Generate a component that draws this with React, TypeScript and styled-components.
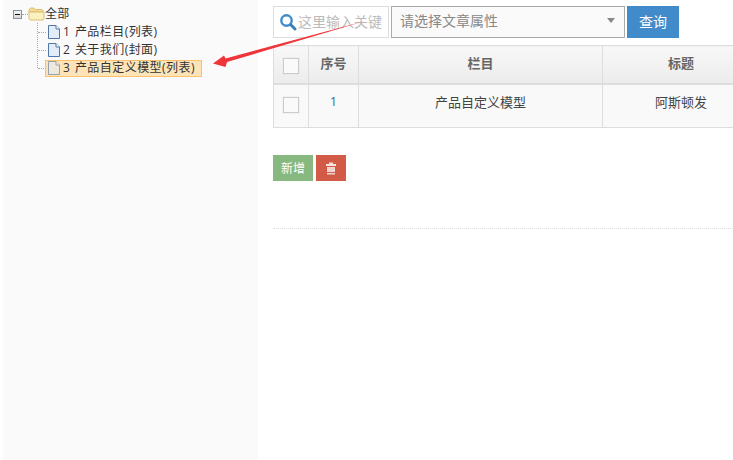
import styled, { createGlobalStyle } from 'styled-components'

const GlobalStyle = createGlobalStyle`
	html, body {
		margin: 0;
		background: #fff;
		font-family: "Open Sans", "Liberation Sans", "Noto Sans CJK SC", sans-serif;
		overflow: hidden;
	}
`

function PageIcon({ faded }: { faded: boolean }) {
	return (
		<svg width="16" height="16" viewBox="0 0 16 16" opacity={faded ? 0.6 : 1}>
			<path d="M2.500 1.500h7.500l3.500 3.500v9.500h-11z" fill="#e3edfa" stroke="#4f78a8" />
			<path d="M10 1.500v3.500h3.500" fill="#fff" stroke="#4f78a8" />
		</svg>
	)
}

function FolderIcon() {
	return (
		<svg width="17" height="14" viewBox="0 0 17 14">
			<path d="M1 4V2.500L2.500 1h3.500l1.500 1.500h6.500l1 1V5H1z" fill="#f3dc96" stroke="#dcbd6e" />
			<path d="M1 5h15v6.500l-1 1.500H2l-1-1.500z" fill="#fbf0c0" stroke="#dcbd6e" />
		</svg>
	)
}

function TrashIcon() {
	return (
		<svg width="12" height="13" viewBox="0 0 12 13">
			<path d="M4 .500h4v1.500h3v2H1V2h3z" fill="#f7e3df" />
			<path d="M2 5h8v7.500H2z" fill="#f3d3cd" />
			<path d="M2 10h8v.800H2z" fill="#b9493a" />
		</svg>
	)
}

function SearchIcon() {
	return (
		<svg width="18" height="18" viewBox="0 0 18 18">
			<circle cx="7.500" cy="7.500" r="5.200" fill="none" stroke="#428bca" strokeWidth="2.400" />
			<path d="M11.500 11.500l4.500 4.500" stroke="#3d7fb8" strokeWidth="3" strokeLinecap="round" />
		</svg>
	)
}

const treeItems = [
	{ label: '1 产品栏目(列表)', active: false },
	{ label: '2 关于我们(封面)', active: false },
	{ label: '3 产品自定义模型(列表)', active: true },
]

function App() {
	return (
		<>
			<GlobalStyle />
			<Page>
				<Sidebar>
					<TreeRoot>
						<Toggle />
						<RootLink />
						<FolderIcon />
						<span>全部</span>
					</TreeRoot>
					<TreeList>
						{treeItems.map((item) => (
							<TreeRow key={item.label}>
								<Dots />
								<TreeNode $active={item.active}>
									<PageIcon faded={item.active} />
									<NodeText>{item.label}</NodeText>
								</TreeNode>
							</TreeRow>
						))}
					</TreeList>
				</Sidebar>
				<Main>
					<Toolbar>
						<SearchBox>
							<SearchIcon />
							<Placeholder>这里输入关键</Placeholder>
						</SearchBox>
						<SelectBox>
							<span>请选择文章属性</span>
							<Caret />
						</SelectBox>
						<QueryButton>查询</QueryButton>
					</Toolbar>
					<TableWrap>
						<Table>
							<colgroup>
								<col width="35" />
								<col width="50" />
								<col width="244" />
								<col width="157" />
							</colgroup>
							<thead>
								<tr>
									<Th $check><Check /></Th>
									<Th>序号</Th>
									<Th>栏目</Th>
									<Th>标题</Th>
								</tr>
							</thead>
							<tbody>
								<tr>
									<Td $check><Check /></Td>
									<Td $link>1</Td>
									<Td>产品自定义模型</Td>
									<Td>阿斯顿发</Td>
								</tr>
							</tbody>
						</Table>
					</TableWrap>
					<Actions>
						<AddButton>新增</AddButton>
						<DeleteButton><TrashIcon /></DeleteButton>
					</Actions>
					<Divider />
				</Main>
				<Arrow width="733" height="460" viewBox="0 0 733 460">
					<path
						d="M213 63.500L224 55.500 225.500 58.500 365 21 227 62 225.500 67z"
						fill="#f0353a"
					/>
				</Arrow>
			</Page>
		</>
	)
}

const Page = styled.div`
	position: relative;
	display: flex;
	width: 733px;
	height: 460px;
	overflow: hidden;
`

const Sidebar = styled.aside`
	width: 255px;
	margin-left: 3px;
	padding: 6px 0 0 10px;
	box-sizing: border-box;
	background: #fafafa;
	font-size: 12px;
	color: #333;
`

const TreeRoot = styled.div`
	display: flex;
	align-items: center;
	height: 16px;

	span {
		letter-spacing: 0.3px;
		line-height: 16px;
	}
`

const Toggle = styled.i`
	position: relative;
	width: 7px;
	height: 7px;
	border: 1px solid #7f93ab;
	background: linear-gradient(#f4f4f4, #d8d8d8);

	&::after {
		content: '';
		position: absolute;
		left: 1px;
		top: 3px;
		width: 5px;
		height: 1px;
		background: #111;
	}
`

const RootLink = styled.i`
	width: 6px;
	border-top: 1px dotted #aaa;
`

const TreeList = styled.div`
	margin-top: 1px;
	margin-left: 24px;
	height: 45px;
	border-left: 1px dotted #aaa;
`

const TreeRow = styled.div`
	display: flex;
	align-items: center;
	height: 18px;
`

const Dots = styled.i`
	flex: none;
	width: 8px;
	border-top: 1px dotted #aaa;
`

const TreeNode = styled.div<{ $active: boolean }>`
	display: flex;
	align-items: center;
	height: ${(p) => (p.$active ? '15px' : '18px')};
	padding-right: ${(p) => (p.$active ? '6px' : '0')};
	margin-left: ${(p) => (p.$active ? '-1px' : '0')};
	border: ${(p) => (p.$active ? '1px solid #fbc26c' : 'none')};
	background: ${(p) => (p.$active ? '#fde3b8' : 'transparent')};
`

const NodeText = styled.span`
	margin-left: 1px;
	line-height: 16px;
	letter-spacing: 0.45px;
	word-spacing: 1px;
	white-space: nowrap;
`

const Main = styled.main`
	flex: 1;
	min-width: 0;
	padding: 6px 0 0 15px;
`

const Toolbar = styled.div`
	display: flex;
	gap: 2px;
	height: 32px;
`

const SearchBox = styled.div`
	display: flex;
	align-items: center;
	gap: 1px;
	width: 116px;
	padding-left: 5px;
	box-sizing: border-box;
	border: 1px solid #ddd;
	overflow: hidden;
`

const Placeholder = styled.span`
	padding-bottom: 2px;
	font-size: 14px;
	color: #bbb;
	white-space: nowrap;
`

const SelectBox = styled.div`
	display: flex;
	align-items: center;
	justify-content: space-between;
	width: 234px;
	padding: 0 9px 5px 8px;
	box-sizing: border-box;
	border: 1px solid #aaa;
	background: #fafafa;
	font-size: 14px;
	color: #888;
`

const Caret = styled.i`
	width: 0;
	height: 0;
	margin-top: 2px;
	border-left: 4px solid transparent;
	border-right: 4px solid transparent;
	border-top: 5px solid #888;
`

const QueryButton = styled.button`
	width: 52px;
	padding: 0 0 2px;
	border: 0;
	background: #428bca;
	color: #fff;
	font: inherit;
	font-size: 14px;
`

const TableWrap = styled.div`
	margin-top: 7px;
	width: 460px;
	overflow: hidden;
`

const Table = styled.table`
	width: 486px;
	table-layout: fixed;
	border-collapse: collapse;
	font-size: 13px;
`

const Th = styled.th<{ $check?: boolean }>`
	height: ${(p) => (p.$check ? '37px' : '32px')};
	padding: 0 0 ${(p) => (p.$check ? '0' : '5px')};
	border: 1px solid #ddd;
	border-bottom-width: 2px;
	background: linear-gradient(#f8f8f8, #ececec);
	color: #666;
	font-weight: 700;
	text-align: center;
`

const Td = styled.td<{ $link?: boolean; $check?: boolean }>`
	height: ${(p) => (p.$check ? '37px' : '32px')};
	padding: 0 0 ${(p) => (p.$check ? '5px' : '10px')};
	border: 1px solid #ddd;
	background: #f9f9f9;
	color: ${(p) => (p.$link ? '#3a6f94' : '#444')};
	text-align: center;
`

const Check = styled.span`
	display: inline-block;
	width: 14px;
	height: 14px;
	border: 1px solid #ccc;
	background: #fafafa;
	box-shadow: 0 0 1px #ccc;
	vertical-align: middle;
`

const Actions = styled.div`
	display: flex;
	gap: 3px;
	margin-top: 27px;
`

const AddButton = styled.button`
	width: 40px;
	height: 26px;
	padding: 0;
	border: 0;
	background: #87b87f;
	color: #fff;
	font: inherit;
	font-size: 12px;
`

const DeleteButton = styled.button`
	display: flex;
	align-items: center;
	justify-content: center;
	width: 30px;
	height: 26px;
	padding: 0;
	border: 0;
	background: #d15b47;
`

const Divider = styled.div`
	margin-top: 47px;
	border-top: 1px dotted #ddd;
`

const Arrow = styled.svg`
	position: absolute;
	left: 0;
	top: 0;
	pointer-events: none;
`

export default App
